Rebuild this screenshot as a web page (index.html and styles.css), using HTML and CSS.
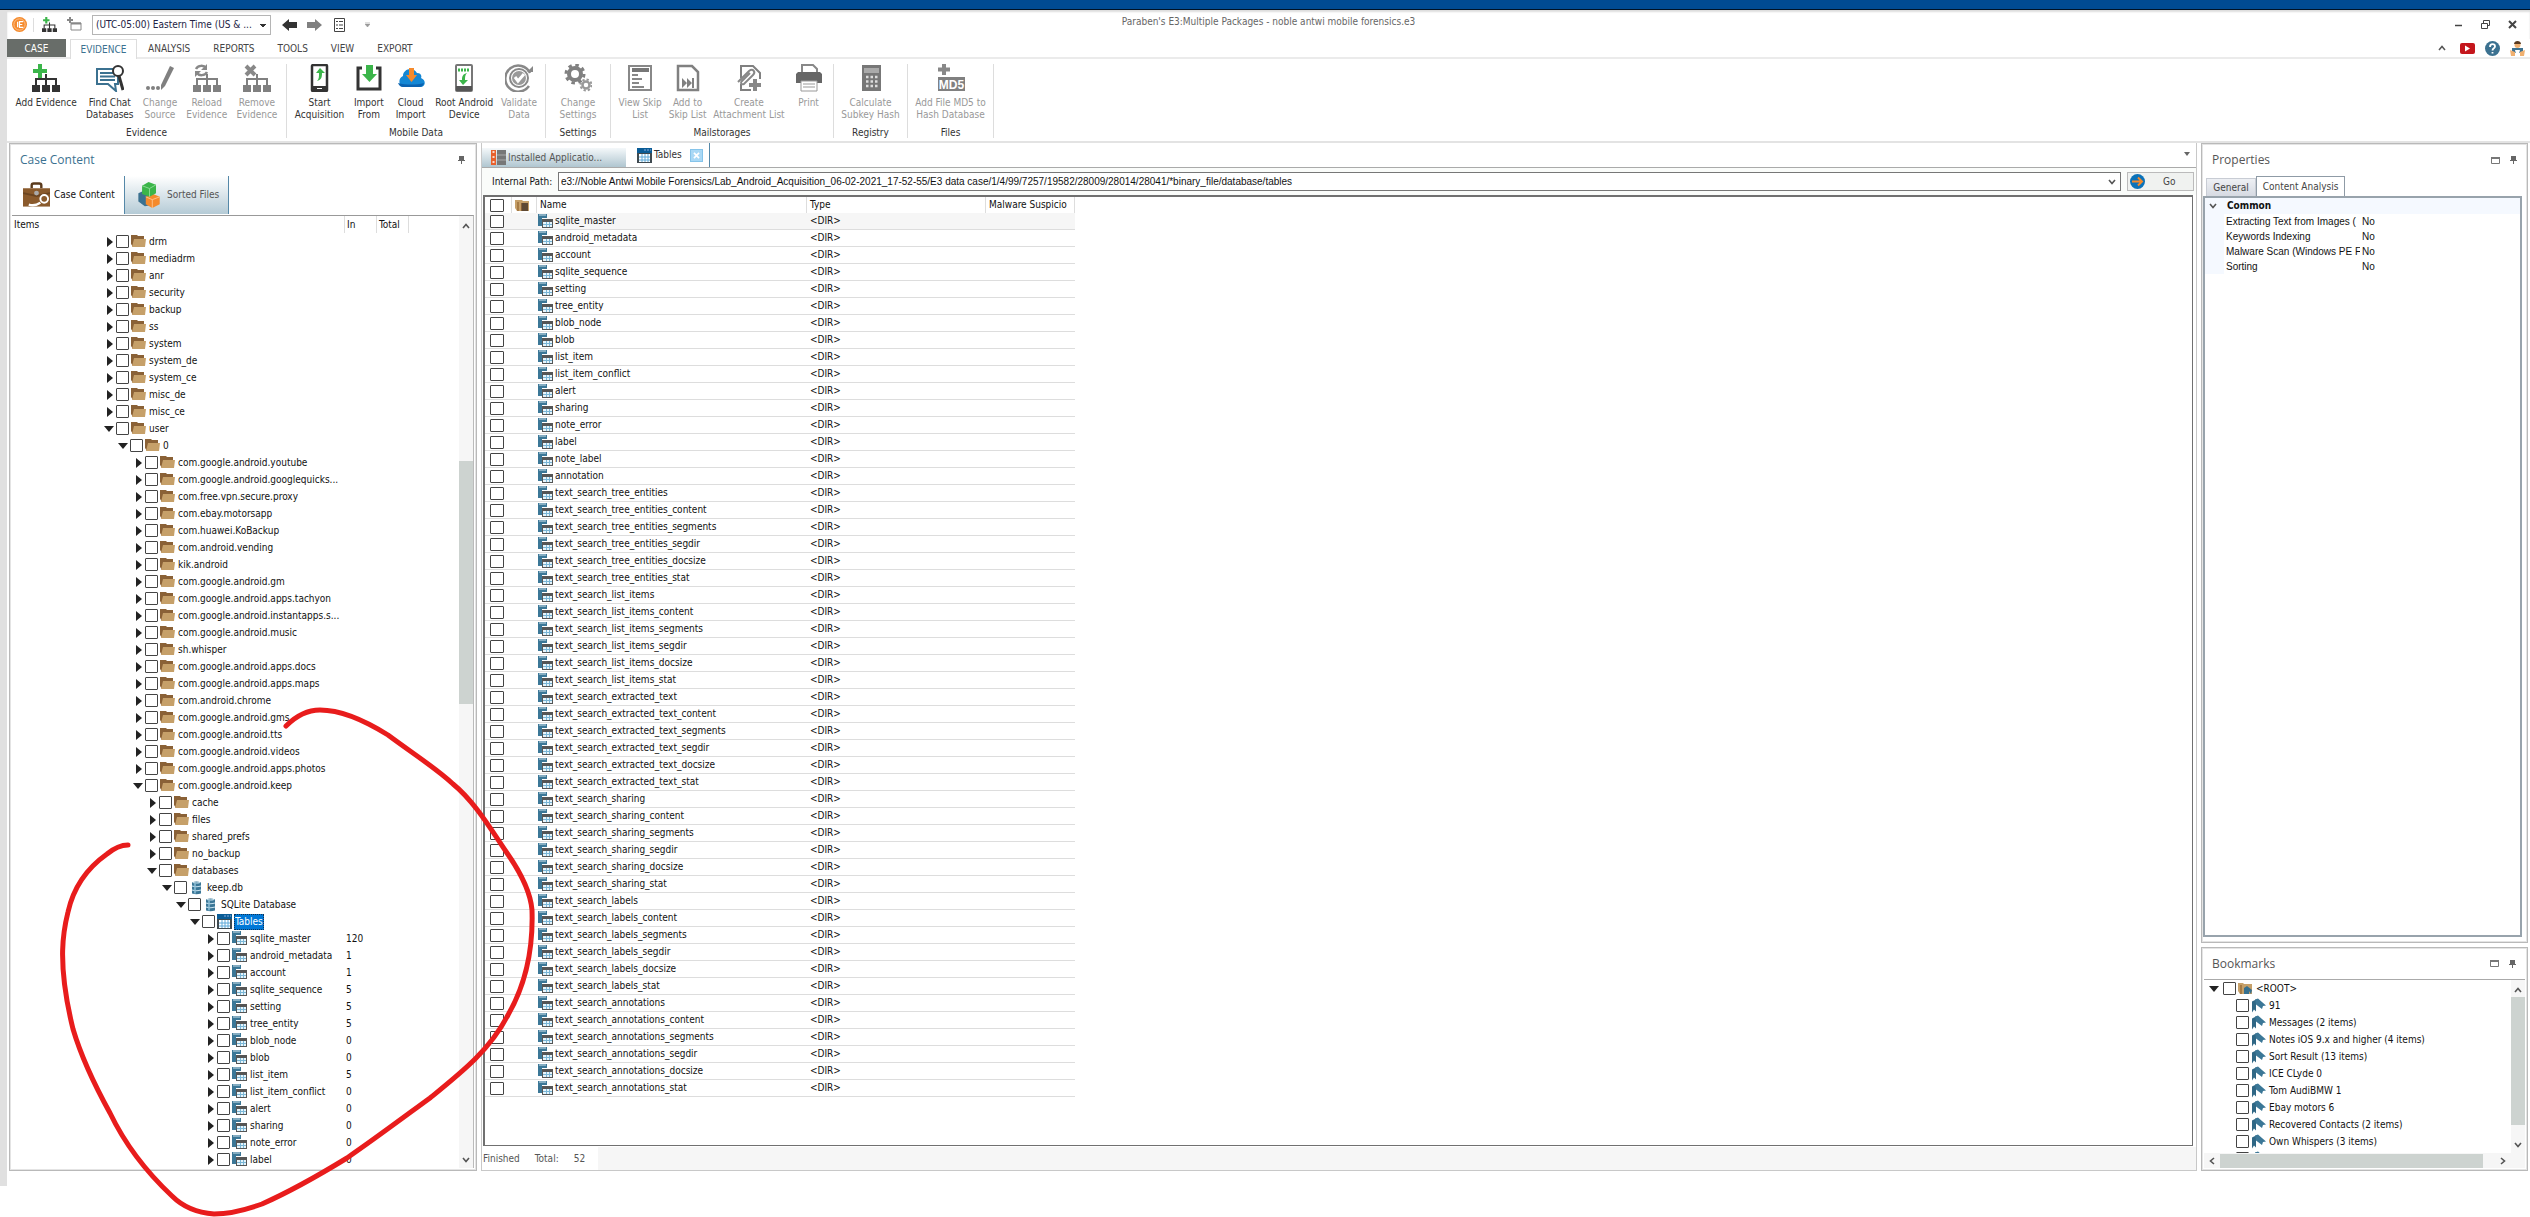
FILE: index.html
```html
<!DOCTYPE html>
<html lang="en">
<head>
<meta charset="utf-8">
<title>Paraben's E3:Multiple Packages - noble antwi mobile forensics.e3</title>
<link rel="stylesheet" href="styles.css">
</head>
<body>
<svg width="0" height="0" class="defs" aria-hidden="true">
  <symbol id="folder" viewBox="0 0 15 13"><path d="M0 0h6l1 1h6v11H2L0 9z" fill="#8a6136"/><path d="M3 4h12l-1 8H1z" fill="#c6a069"/></symbol>
  <symbol id="folder-list" viewBox="0 0 15 13"><path d="M0 1h7l1 1h6v10H2L0 9z" fill="#c6a069"/><path d="M2 3h2v9H2z" fill="#a67b45"/><path d="M6 4h7v8H6z" fill="#8a6136"/><path d="M7 5h6M7 7h6M7 9h6M7 11h6" stroke="#333"/></symbol>
  <symbol id="folder-mark" viewBox="0 0 15 13"><path d="M0 1h5l1 1h8v10H2L0 9z" fill="#c6a069"/><path d="M2 3h2v9H2z" fill="#a67b45"/><path d="M6 6l3-2 5 4-1 4-2-3v3H6z" fill="#36708f"/></symbol>
  <symbol id="db" viewBox="0 0 15 14"><path d="M3 2q4.500-2 9 0v11q-4.500 1.500-9 0z" fill="#3b7797"/><path d="M3 5.500q4.500 1.500 9 0M3 9.500q4.500 1.500 9 0M4 2q3.500 1 7 0" fill="none" stroke="#c8e2ee" stroke-width="1.2"/><path d="M6 3v10" stroke="#8fc0d8" stroke-width="1.500"/></symbol>
  <symbol id="table" viewBox="0 0 15 15"><path d="M0 0h15v15H0z" fill="#3f4a50"/><path d="M0 0h15v5H0z" fill="#0a5c96"/><path d="M7 2h2M10 2h2M13 2h1" stroke="#8ad" stroke-width="1"/><path d="M2 6h11v8H2z" fill="#fff"/><path d="M5 6v8M8 6v8M11 6v8M2 9h11M2 12h11" stroke="#5ea9d8"/></symbol>
  <symbol id="tables" viewBox="0 0 15 15"><path d="M0 0h9v4H4v8H0z" fill="#3b7797"/><path d="M1 1h7" stroke="#cfe3ec"/><path d="M4 5h11v9H4z" fill="#555"/><path d="M5 8h9v5H5z" fill="#e6f4fb"/><path d="M8.500 8v5M11.500 8v5M5 10.500h9" stroke="#7ab6d6"/></symbol>
  <symbol id="mark" viewBox="0 0 15 14"><path d="M1 3l4-2v12l-2-2-2 3z" fill="#2f6785"/><path d="M4 1l3-1 8 7-3 .5-1 3L5 6z" fill="#3b7797"/></symbol>
  <symbol id="pin" viewBox="0 0 8 8"><path d="M2 0h5v4h1v1H5v3H4V5H1V4h1z" fill="#666"/></symbol>
  <symbol id="max" viewBox="0 0 9 7"><path d="M.5.5h8v6h-8z" fill="none" stroke="#777"/><path d="M0 1h9" stroke="#777" stroke-width="2"/></symbol>
  <symbol id="chev" viewBox="0 0 8 6"><path d="M1 1l3 3.500L7 1" fill="none" stroke="#555" stroke-width="1.600"/></symbol>
  <symbol id="net" viewBox="0 0 28 18"><path d="M14 0v12M4 12V5h20v7" fill="none" stroke="currentColor" stroke-width="2"/><path d="M0 11h8v7H0zM10 11h8v7h-8zM20 11h8v7h-8z" fill="currentColor"/></symbol>
</svg>

<div class="host-bar"></div>
<div class="frame">
  <header class="titlebar">
    <div class="quick">
      <svg class="logo" viewBox="0 0 16 16"><circle cx="8" cy="8" r="8" fill="#f58a2c"/><circle cx="8" cy="8" r="6" fill="none" stroke="#fcc491"/><path d="M12 5H8v6h4M8 8h3M6 5v6" stroke="#fff" stroke-width="1.300" fill="none"/></svg>
      <i class="sep"></i>
      <svg class="q-add" viewBox="0 0 28 28"><path d="M8 0v12M2 6h12" stroke="#3bb54a" stroke-width="4"/><use href="#net" y="10" width="28" height="18" color="#333"/></svg>
      <svg class="q-win" viewBox="0 0 15 15"><path d="M3 0v6M0 3h6" stroke="#888" stroke-width="2"/><path d="M4 6h10v7H4z" fill="none" stroke="#888"/><path d="M4 6.500h10" stroke="#888" stroke-width="2"/></svg>
      <select aria-label="Time zone"><option>(UTC-05:00) Eastern Time (US &amp; ...</option></select>
      <svg class="arrow" viewBox="0 0 15 12"><path d="M0 6l7-6v3h8v6H7v3z" fill="#333"/></svg>
      <svg class="arrow" viewBox="0 0 15 12"><path d="M15 6L8 0v3H0v6h8v3z" fill="#808080"/></svg>
      <svg class="q-list" viewBox="0 0 11 14"><path d="M.5.5h10v13H.5z" fill="none" stroke="#444"/><path d="M2 3.500h2M5 3.500h4M2 7h2M5 7h4M2 10.500h2M5 10.500h4" stroke="#444"/></svg>
      <svg class="q-more" viewBox="0 0 5 5"><path d="M0 0h5M0 2h5L2.500 5z" fill="#999" stroke="#999" stroke-width=".6"/></svg>
    </div>
    <h1>Paraben's E3:Multiple Packages - noble antwi mobile forensics.e3</h1>
    <div class="win">
      <button aria-label="Minimize"><svg viewBox="0 0 9 9"><path d="M1 5.500h7" stroke="#444" stroke-width="1.500"/></svg></button>
      <button aria-label="Restore"><svg viewBox="0 0 9 9"><path d="M.5 3.500h6v5h-6zM2.500 3V.5h6v5H7" fill="none" stroke="#444"/></svg></button>
      <button aria-label="Close"><svg viewBox="0 0 9 9"><path d="M1 1l7 7M8 1L1 8" stroke="#444" stroke-width="2"/></svg></button>
    </div>
  </header>

  <nav class="menu">
    <button class="case">CASE</button>
    <button class="on">EVIDENCE</button>
    <button>ANALYSIS</button><button>REPORTS</button><button>TOOLS</button><button>VIEW</button><button>EXPORT</button>
    <div class="help">
      <svg class="up" viewBox="0 0 8 6"><path d="M1 5l3-3.500L7 5" fill="none" stroke="#555" stroke-width="1.500"/></svg>
      <svg class="yt" viewBox="0 0 15 11"><rect width="15" height="11" rx="2" fill="#c4161c"/><path d="M5 2.500l5 3-5 3z" fill="#fff"/></svg>
      <svg class="hp" viewBox="0 0 15 15"><circle cx="7.500" cy="7.500" r="7.500" fill="#3b7190"/><path d="M5 6c0-4 5-3.500 5-.5 0 2-2.500 1.500-2.500 4M7.500 11v1.500" fill="none" stroke="#fff" stroke-width="1.800"/></svg>
      <svg class="hp" viewBox="0 0 15 15"><circle cx="7.500" cy="4" r="3" fill="#f0b070"/><path d="M4 3c0-4 7-4 7 0z" fill="#5a3a20"/><path d="M2 7h11v5H2z" fill="#3b7190"/><path d="M0 9l5 2v4H1zM15 9l-5 2v4h4z" fill="#f0b070"/><path d="M5 9h5l-1 4H6z" fill="#fff"/></svg>
    </div>
  </nav>

  <div class="ribbon">
    <section class="group g-evidence">
      <div class="tools">
        <button><svg viewBox="0 0 28 28"><path d="M8 0v14M1 7h14" stroke="#3bb54a" stroke-width="4"/><use href="#net" y="10" width="28" height="18" color="#333"/></svg>Add Evidence</button>
        <button><svg viewBox="0 0 28 28"><path d="M1 5h21v15h-3l1 7-8-7H1z" fill="#fff" stroke="#3b7190" stroke-width="2"/><path d="M4 9h14M4 12.500h15M4 16h15" stroke="#3b7190" stroke-width="2"/><circle cx="22" cy="7" r="5" fill="#fff" stroke="#333" stroke-width="2"/><path d="M23 12l4 14" stroke="#333" stroke-width="3"/></svg>Find Chat<br>Databases</button>
        <button disabled><svg viewBox="0 0 28 28"><path d="M24 2l4 2-9 18-4 4v-5z" fill="#808080"/><circle cx="2" cy="24" r="2" fill="#808080"/><circle cx="7" cy="24" r="2" fill="#808080"/><circle cx="12" cy="24" r="2" fill="#808080"/></svg>Change<br>Source</button>
        <button disabled><svg viewBox="0 0 28 28"><path d="M3 5c2-4 8-4 10-1M14 8c-2 4-8 4-10 1" fill="none" stroke="#888" stroke-width="2.500"/><path d="M14 0v6H8zM2 13V7h6z" fill="#888"/><use href="#net" y="10" width="28" height="18" color="#808080"/></svg>Reload<br>Evidence</button>
        <button disabled><svg viewBox="0 0 28 28"><path d="M3 2l9 9M12 2l-9 9" stroke="#888" stroke-width="4"/><use href="#net" y="10" width="28" height="18" color="#808080"/></svg>Remove<br>Evidence</button>
      </div><h2>Evidence</h2>
    </section>
    <section class="group g-mobile">
      <div class="tools">
        <button><svg viewBox="0 0 28 28"><rect x="7" y="1" width="15" height="26" rx="1" fill="#fff" stroke="#333" stroke-width="2.500"/><path d="M6 22h17v5H6z" fill="#333"/><path d="M12 24.500h5" stroke="#fff"/><path d="M15 4l5 5h-3c0 5-1 7-5 8 2-2 2-4 2-8h-3z" fill="#3bb54a"/></svg>Start<br>Acquisition</button>
        <button><svg viewBox="0 0 28 28"><path d="M7 4H3v21h22V4h-4" fill="none" stroke="#333" stroke-width="3"/><path d="M11 1h7v9h4l-7.500 8L7 10h4z" fill="#3bb54a"/></svg>Import<br>From</button>
        <button><svg viewBox="0 0 28 28"><path d="M6 23a6 6 0 010-11C6 5 16 2 20 9c4 0 5 3 4 5 5 2 5 8 0 9z" fill="#1487d4"/><path d="M1 19c8 2 18 2 26 0-1 3-3 4-5 4H6c-3 0-4-2-5-4z" fill="#0a62b0"/><path d="M12 4h5v7h3l-5.500 7L9 11h3z" fill="#f58a2c"/></svg>Cloud<br>Import</button>
        <button><svg viewBox="0 0 28 28"><rect x="6" y="1" width="16" height="26" rx="1" fill="#fff" stroke="#777" stroke-width="2"/><path d="M6 22h16v5H6z" fill="#555"/><path d="M8 6h12" stroke="#3bb54a" stroke-width="3" stroke-dasharray="2 1"/><path d="M13 21l-4-5h3c0-4 1-6 5-7-2 2-2 4-2 7h3z" fill="#3bb54a"/></svg>Root Android<br>Device</button>
        <button disabled><svg viewBox="0 0 28 28"><path d="M25 9a13 13 0 10-1 13" fill="none" stroke="#888" stroke-width="2.500"/><circle cx="14" cy="14" r="9" fill="none" stroke="#888" stroke-width="2"/><circle cx="14" cy="14" r="7" fill="#999"/><path d="M10 13l3 4 6-7" fill="none" stroke="#fff" stroke-width="3"/><path d="M22 8h6V2z" fill="#888"/></svg>Validate<br>Data</button>
      </div><h2>Mobile Data</h2>
    </section>
    <section class="group g-settings">
      <div class="tools">
        <button disabled><svg viewBox="0 0 28 28"><circle cx="11" cy="10" r="6" fill="none" stroke="#808080" stroke-width="4"/><circle cx="11" cy="10" r="9" fill="none" stroke="#808080" stroke-width="3" stroke-dasharray="3.500 3.570"/><circle cx="22" cy="21" r="3.500" fill="none" stroke="#999" stroke-width="2.500"/><circle cx="22" cy="21" r="5.500" fill="none" stroke="#999" stroke-width="2" stroke-dasharray="2.300 2"/></svg>Change<br>Settings</button>
      </div><h2>Settings</h2>
    </section>
    <section class="group g-mail">
      <div class="tools">
        <button disabled><svg viewBox="0 0 28 28"><path d="M3 2h22v24H3z" fill="none" stroke="#888" stroke-width="2"/><path d="M6 6h17" stroke="#777" stroke-width="4"/><path d="M6 11h6M6 15h10M6 19h7M6 23h12" stroke="#888" stroke-width="2"/></svg>View Skip<br>List</button>
        <button disabled><svg viewBox="0 0 28 28"><path d="M4 2h14l6 6v18H4z" fill="none" stroke="#808080" stroke-width="2.500"/><path d="M8 14l5 5-5 5zM13 14l5 5-5 5zM18 14h2v10h-2z" fill="#808080"/></svg>Add to<br>Skip List</button>
        <button disabled><svg viewBox="0 0 28 28"><path d="M6 14V2h12l7 7v6M6 20v6h10" fill="none" stroke="#808080" stroke-width="2"/><path d="M3 18L14 7c4-3 7 1 4 4L9 20c-3 1-4-1-2-3l8-8" fill="none" stroke="#888" stroke-width="2"/><path d="M20 15v12M14 21h12" stroke="#888" stroke-width="4"/></svg>Create<br>Attachment List</button>
        <button disabled><svg viewBox="0 0 28 28"><path d="M7 8V1h11l4 4v4" fill="none" stroke="#888" stroke-width="2"/><path d="M3 8h22l2 2v9H1v-9z" fill="#666"/><path d="M6 17h16v10H6z" fill="#fff" stroke="#999"/><path d="M8 20h12M8 23h12" stroke="#999"/></svg>Print</button>
      </div><h2>Mailstorages</h2>
    </section>
    <section class="group g-registry">
      <div class="tools">
        <button disabled><svg viewBox="0 0 28 28"><path d="M5 1h19v26H5z" fill="#777"/><path d="M7 4h15v5H7z" fill="#aaa"/><path d="M9 13h12M9 17.500h12M9 22h12" stroke="#ddd" stroke-width="2.500" stroke-dasharray="2.500 2"/></svg>Calculate<br>Subkey Hash</button>
      </div><h2>Registry</h2>
    </section>
    <section class="group g-files">
      <div class="tools">
        <button disabled><svg viewBox="0 0 28 28"><path d="M7 0v11M1 5.500h12" stroke="#888" stroke-width="4"/><path d="M1 13h27v14H1z" fill="#808080"/><text x="14.500" y="25" text-anchor="middle" class="md5">MD5</text></svg>Add File MD5 to<br>Hash Database</button>
      </div><h2>Files</h2>
    </section>
  </div>

  <main class="dock">
    <section class="panel case-panel">
      <div class="phead blue"><h3>Case Content</h3><svg class="pin"><use href="#pin"/></svg></div>
      <div class="ctabs">
        <button><svg viewBox="0 0 28 26"><path d="M9 6V3q0-2 2-2h6q2 0 2 2v3" fill="none" stroke="#5a3a1c" stroke-width="2.500"/><path d="M0 6h28v19H0z" fill="#8a5a2c"/><path d="M0 11l14 3 14-3" stroke="#6b4420" stroke-width="2" fill="none"/><circle cx="14" cy="11" r="2.500" fill="#aaa"/><circle cx="22" cy="17" r="4" fill="none" stroke="#fff" stroke-width="2"/><path d="M18 21q-6 4-12 2" stroke="#fff" stroke-width="2.500" fill="none"/></svg>Case Content</button>
        <button class="alt"><svg viewBox="0 0 26 28"><path d="M1 12l7-3 6 4v12l-6 1-7-5z" fill="#3b7190"/><path d="M9 16l8-3 7 3v8l-8 4-7-4z" fill="#f58a2c"/><path d="M16 19l8-3M16 19v9M16 19l-7-3" stroke="#ffc48c"/><path d="M5 4l7-4 8 3v9l-7 4-8-3z" fill="#3bb54a"/><path d="M13 7l7-4M13 7v9M13 7L5 4" stroke="#8ddb97"/></svg>Sorted Files</button>
      </div>
      <div class="tree-box">
        <div class="tree-main">
          <div class="tree-head"><span class="c-items">Items</span><span class="c-in">In</span><span class="c-total">Total</span></div>
          <ul class="tree" id="tree"></ul>
        </div>
        <div class="vbar tall"><svg class="flip"><use href="#chev"/></svg><i></i><svg><use href="#chev"/></svg></div>
      </div>
    </section>

    <section class="center">
      <div class="dtabs">
        <button class="dim"><svg viewBox="0 0 15 15"><path d="M0 0h5v15H0z" fill="#e8602c"/><path d="M1.500 2h2M1.500 7h2M1.500 12h2" stroke="#fff" stroke-width="1.500"/><path d="M6 0h9v15H6z" fill="#777"/><path d="M6 5h9M6 10h9" stroke="#aaa"/></svg>Installed Applicatio...</button>
        <button class="on"><svg><use href="#table"/></svg>Tables<span class="x"><svg viewBox="0 0 13 13"><path d="M3.500 3.500l6 6M9.500 3.500l-6 6" stroke="#fff" stroke-width="2"/></svg></span></button>
        <svg class="drop" viewBox="0 0 6 4"><path d="M0 0h6L3 4z" fill="#666"/></svg>
      </div>
      <div class="path">
        <label for="path">Internal Path:</label>
        <div class="combo"><input id="path" type="text" value="e3://Noble Antwi Mobile Forensics/Lab_Android_Acquisition_06-02-2021_17-52-55/E3 data case/1/4/99/7257/19582/28009/28014/28041/*binary_file/database/tables"><button aria-label="Path history"><svg><use href="#chev"/></svg></button></div>
        <button class="go"><svg viewBox="0 0 15 15"><circle cx="7.500" cy="7.500" r="7.500" fill="#0b72b9"/><path d="M2 7.500h10M8 3.500l4 4-4 4" fill="none" stroke="#f58a2c" stroke-width="2"/></svg><span>Go</span></button>
      </div>
      <div class="grid-box">
        <table>
          <colgroup><col class="k1"><col class="k2"><col class="k3"><col class="k4"><col class="k5"></colgroup>
          <thead><tr><th><input type="checkbox" aria-label="Select all"></th><th><svg class="ic"><use href="#folder-list"/></svg></th><th>Name</th><th>Type</th><th>Malware Suspicio</th></tr></thead>
          <tbody id="rows"></tbody>
        </table>
      </div>
      <footer class="status"><span>Finished</span><span>Total:</span><span>52</span></footer>
    </section>

    <aside class="side">
      <section class="panel props">
        <div class="phead"><h3>Properties</h3><svg class="max"><use href="#max"/></svg><svg class="pin"><use href="#pin"/></svg></div>
        <div class="ptabs"><button>General</button><button class="on">Content Analysis</button></div>
        <div class="prop-box">
          <div class="common"><svg><use href="#chev"/></svg><b>Common</b></div>
          <dl>
            <dt>Extracting Text from Images (</dt><dd>No</dd>
            <dt>Keywords Indexing</dt><dd>No</dd>
            <dt>Malware Scan (Windows PE Fil</dt><dd>No</dd>
            <dt>Sorting</dt><dd>No</dd>
          </dl>
        </div>
      </section>
      <section class="panel marks">
        <div class="phead"><h3>Bookmarks</h3><svg class="max"><use href="#max"/></svg><svg class="pin"><use href="#pin"/></svg></div>
        <div class="marks-box">
          <div class="marks-main">
            <ul id="marks"></ul>
            <div class="vbar"><svg class="flip"><use href="#chev"/></svg><i></i><svg><use href="#chev"/></svg></div>
          </div>
          <div class="hbar"><svg class="left"><use href="#chev"/></svg><i></i><svg class="right"><use href="#chev"/></svg></div>
        </div>
      </section>
    </aside>
  </main>
</div>

<svg class="ink" viewBox="0 0 560 1217" aria-hidden="true"><path d="M286 726Q302 710 320 710Q348 710 388 735C412 753 436 768 453 784C474 801 490 828 507 853Q530 886 532 910Q534 970 508 1015C490 1050 462 1072 430 1098C404 1117 376 1138 347 1158Q298 1188 262 1204Q234 1214 214 1214Q188 1212 172 1196C140 1166 122 1138 110 1113Q84 1066 73 1029C56 960 64 928 68 912Q76 876 107 854Q118 845 128 845"/></svg>
<script src="app.js"></script>
</body>
</html>
```
FILE: styles.css
```css
* { box-sizing: border-box; }
body { margin: 0; min-height: 100vh; background: #fff; color: #111; font: 10px/12px "DejaVu Sans Condensed", "Noto Sans", sans-serif; position: relative; }
h1, h2, h3, ul, dl, dd { margin: 0; padding: 0; font-weight: normal; font-size: inherit; }
ul { list-style: none; }
button, input, select { font: inherit; color: inherit; margin: 0; padding: 0; border: 0; background: none; border-radius: 0; }
svg { display: block; flex: none; }
.defs { position: absolute; }
.host-bar { height: 10px; background: #004b93; border-bottom: 1px solid #001225; }
.frame { border-left: 7px solid #e0e0e0; padding-bottom: 15px; }

/* Title bar */
.titlebar { height: 29px; display: grid; grid-template-columns: 1fr auto 1fr; align-items: center; box-shadow: inset 0 2px 2px #ddd; }
.titlebar h1 { color: #666; padding-bottom: 6px; }
.quick { display: flex; align-items: center; padding-left: 5px; }
.logo { width: 15px; height: 15px; }
.sep { width: 1px; height: 14px; background: #ddd; margin: 0 8px 0 6px; }
.q-add { width: 15px; height: 15px; margin-right: 10px; }
.q-win { width: 15px; height: 15px; margin-right: 10px; }
.quick select { width: 179px; height: 20px; appearance: none; border: 1px solid #b5b5b5; padding-left: 3px; color: #224; margin-right: 11px; background: linear-gradient(#333, #333) 167px 8px / 6px 1px no-repeat, linear-gradient(#333, #333) 168px 9px / 4px 1px no-repeat, linear-gradient(#333, #333) 169px 10px / 2px 1px no-repeat; }
.arrow { width: 15px; height: 12px; margin-right: 10px; }
.q-list { width: 11px; height: 14px; margin: 0 20px 0 2px; }
.q-more { width: 5px; height: 5px; }
.win { display: flex; justify-content: flex-end; gap: 18px; padding-right: 13px; }
.win svg { width: 9px; height: 9px; }

/* Menu */
.menu { height: 20px; display: flex; align-items: stretch; border-bottom: 2px solid #ebebeb; color: #444; }
.menu button { margin-right: 23px; padding-top: 1px; }
.menu .case { width: 59px; margin-right: 4px; background: #686d69; color: #fff; }
.menu .on { width: 67px; height: 20px; margin-right: 11px; background: #fff; border: 1px solid #ddd; border-bottom: 0; color: #3b7190; }
.help { margin-left: auto; display: flex; align-items: center; gap: 10px; padding-right: 5px; }
.up { width: 8px; height: 6px; margin-right: 4px; }
.yt { width: 15px; height: 11px; }
.hp { width: 15px; height: 15px; }

/* Ribbon */
.ribbon { height: 84px; display: flex; padding-top: 5px; border-bottom: 2px solid #e3e3e3; }
.group { height: 74px; border-right: 1px solid #ddd; display: flex; flex-direction: column; justify-content: space-between; }
.tools { display: flex; justify-content: space-around; padding: 0 4px; }
.tools button { display: flex; flex-direction: column; align-items: center; color: #333; text-align: center; white-space: nowrap; min-width: 34px; }
.tools button:disabled { color: #999; }
.tools svg { width: 28px; height: 28px; margin-bottom: 5px; }
.group h2 { text-align: center; color: #333; line-height: 10px; }
.g-evidence { width: 280px; }
.g-mobile { width: 259px; }
.g-settings { width: 65px; }
.g-mail { width: 223px; }
.g-registry { width: 74px; }
.g-files { width: 86px; }
.md5 { font: bold 12px "Liberation Sans", sans-serif; fill: #fff; }

/* Docked panels */
.dock { display: grid; grid-template-columns: 468px minmax(0, 1fr) 327px; gap: 4px; padding: 0 2px; }
.panel { border: 1px solid #b9b9b9; box-shadow: inset 0 0 0 1px #e4e4e4; padding: 0 2px 2px; display: flex; flex-direction: column; }
.phead { height: 32px; display: flex; align-items: center; gap: 9px; padding: 0 9px 0 8px; color: #555; }
.phead h3 { flex: 1; font: 12px/16px "Open Sans", "Noto Sans", sans-serif; }
.blue h3 { color: #3b7190; }
.pin { width: 8px; height: 8px; }
.max { width: 9px; height: 7px; }
.ctabs { display: flex; height: 39px; padding-bottom: 1px; }
.ctabs button { width: 112px; display: flex; align-items: center; gap: 4px; padding-left: 11px; white-space: nowrap; }
.ctabs svg { width: 27px; height: 26px; }
.ctabs .alt { width: 105px; background: linear-gradient(#fff, #b5cbd6); border: solid #5588a8; border-width: 0 1px; color: #555; }
.tree-box { flex: 1; display: flex; border-top: 1px solid #999; border-right: 1px solid #bbb; }
.tree-main { flex: 1; min-width: 0; }
.tree-head { display: flex; height: 17px; line-height: 17px; }
.tree-head span { border-right: 1px solid #ddd; padding-left: 2px; }
.c-items { width: 333px; }
.c-in, .c-total { width: 32px; }
.tree-row, .mark-row { display: flex; align-items: center; height: 17px; white-space: nowrap; }
.name { width: 334px; flex: none; display: flex; align-items: center; }
.lv0 { padding-left: 95px; } .lv1 { padding-left: 109px; } .lv2 { padding-left: 124px; } .lv3 { padding-left: 138px; }
.lv4 { padding-left: 153px; } .lv5 { padding-left: 167px; } .lv6 { padding-left: 181px; } .lv7 { padding-left: 196px; }
.tw { width: 9px; height: 10px; flex: none; }
.tw::before { content: ""; display: block; }
.shut::before { border: solid transparent; border-width: 5px 0 5px 6px; border-left-color: #222; }
.open::before { margin-top: 2px; margin-left: -3px; width: 0; border: solid transparent; border-width: 6px 5px 0; border-top-color: #222; }
label.node { display: flex; align-items: center; }
input[type=checkbox] { appearance: none; width: 13px; height: 13px; border: 1px solid #444; border-radius: 1px; background: #fff; flex: none; display: block; }
.ic { width: 15px; height: 15px; }
.node .ic { margin: 0 2px; }
.node .text { padding: 0 1px; line-height: 16px; }
.node .sel { background: #0078d7; color: #fff; outline: 1px dotted #135; outline-offset: -1px; }
.vbar { width: 14px; background: #f6f6f6; display: flex; flex-direction: column; align-items: center; padding: 7px 0 5px; }
.vbar svg, .hbar svg { width: 8px; height: 6px; }
.vbar i { width: 14px; background: #cdd3d0; height: 128px; margin-top: 4px; margin-bottom: auto; }
.vbar.tall { margin-left: 2px; }
.tall i { height: 243px; margin-top: 232px; }
.flip { transform: rotate(180deg); }

/* Centre document */
.center { display: flex; flex-direction: column; border: solid #c8c8c8; border-width: 0 1px 1px; min-width: 0; }
.dtabs { height: 25px; display: flex; align-items: flex-end; border-bottom: 1px solid #aaa; }
.dtabs button { display: flex; align-items: center; gap: 2px; white-space: nowrap; }
.dtabs button svg { width: 15px; height: 15px; }
.dtabs .dim { width: 144px; height: 19px; padding-left: 9px; color: #555; background: linear-gradient(#f4f8fa, #b0c6d0); }
.dtabs .on { width: 84px; height: 24px; padding-left: 11px; color: #333; border-right: 1px solid #5588a8; }
.x { margin-left: 6px; background: #a9d8f5; border: 1px solid #86c4ea; }
.dtabs .x svg { width: 11px; height: 11px; }
.drop { width: 6px; height: 4px; margin: 0 6px 11px auto; }
.path { height: 27px; display: flex; align-items: center; padding: 0 2px 0 10px; background: #fafcfa; }
.path label { width: 66px; }
.combo { flex: 1; height: 19px; display: flex; border: 1px solid #777; background: #fff; }
.combo input { flex: 1; min-width: 0; padding-left: 2px; font-family: "Liberation Sans", sans-serif; }
.combo button { width: 16px; }
.combo svg { width: 8px; height: 6px; margin: 0 auto; }
.go { width: 67px; height: 19px; margin-left: 6px; border: 1px solid #bbb; background: #f0f2f0; display: flex; align-items: center; padding-left: 2px; color: #444; }
.go svg { width: 15px; height: 15px; }
.go span { margin-left: 18px; }
.grid-box { flex: 1; margin: 0 3px 0 1px; border: 2px solid #707070; border-width: 2px 1px 1px 2px; }
table { table-layout: fixed; width: 590px; border-collapse: separate; border-spacing: 0; }
.k1 { width: 27px; } .k2 { width: 25px; } .k3 { width: 270px; } .k4 { width: 179px; } .k5 { width: 89px; }
th { height: 16px; padding: 0 3px; text-align: left; font-weight: normal; line-height: 14px; border-right: 1px solid #ddd; white-space: nowrap; overflow: hidden; }
td { height: 17px; padding: 0 3px; border-bottom: 1px solid #ddd; line-height: 16px; white-space: nowrap; }
th:first-child, td:first-child { padding-left: 5px; }
td:nth-child(3) { padding-left: 1px; }
table input[type=checkbox] { width: 14px; }
tbody tr:first-child td { background: #f6f6f6; }
.cell { display: flex; align-items: center; gap: 2px; height: 16px; }
.status { height: 23px; display: flex; align-items: center; margin-top: 1px; background: linear-gradient(#fff, #fff) 0 0 / 116px 100% no-repeat #f6f6f6; color: #555; }
.status span { padding-left: 1px; margin-right: 14px; }

/* Right column */
.side { display: flex; flex-direction: column; gap: 4px; }
.props { flex: 1; padding: 0 5px 5px 1px; }
.phead:has(.max) { padding-right: 9px; }
.props .phead { padding: 0 5px 0 9px; }
.ptabs { display: flex; align-items: flex-end; height: 20px; padding-left: 3px; color: #444; }
.ptabs button { width: 50px; height: 18px; background: linear-gradient(#eef0f4, #d6dae2); border: 1px solid #c8ccd4; border-bottom: 0; white-space: nowrap; }
.ptabs .on { width: 89px; height: 20px; background: #fff; border-color: #8f9ba6; }
.prop-box { flex: 1; border: 2px solid #98a3ac; }
.common { height: 16px; display: flex; align-items: center; gap: 10px; padding-left: 4px; background: #f5f9ff; }
.common svg { width: 8px; height: 6px; }
.prop-box dl { display: grid; grid-template-columns: 136px 1fr; grid-auto-rows: 15px; line-height: 15px; border-left: 19px solid #f5f9ff; font-family: "Liberation Sans", sans-serif; }
.prop-box dt { padding-left: 2px; white-space: nowrap; overflow: hidden; }
.prop-box dd { padding-left: 2px; }
.marks-box { border-top: 1px solid #aaa; }
.marks .phead { height: 31px; }
.marks-main { display: flex; height: 173px; overflow: hidden; }
.marks-main ul { flex: 1; overflow: hidden; }
.mark-row { padding-left: 8px; }
.mark-row.kid { padding-left: 32px; }
.mark-row .tw { width: 11px; }
.hbar { height: 15px; display: flex; align-items: center; background: #f6f6f6; padding: 0 18px 0 4px; }
.hbar i { flex: 1; height: 14px; margin: 0 16px 0 4px; background: #cdd3d0; }
.left { transform: rotate(90deg); }
.right { transform: rotate(-90deg); }

/* Hand-drawn mark over the window */
.ink { position: absolute; left: 0; top: 0; width: 560px; height: 1217px; pointer-events: none; }
.ink path { fill: none; stroke: #e81c1c; stroke-width: 5; stroke-linecap: round; stroke-linejoin: round; }
```
FILE: app.js
```js
const icon = id => `<svg class="ic"><use href="#${id}"/></svg>`;
const node = (id, text, cls = "") =>
  `<label class="node"><input type="checkbox">${icon(id)}<span class="text ${cls}">${text}</span></label>`;

// Evidence tree: [level, icon, open, names]
const branches = [
  [0, "folder", 0, "drm mediadrm anr security backup ss system system_de system_ce misc_de misc_ce"],
  [0, "folder", 1, "user"],
  [1, "folder", 1, "0"],
  [2, "folder", 0, "com.google.android.youtube com.google.android.googlequicks... com.free.vpn.secure.proxy com.ebay.motorsapp com.huawei.KoBackup com.android.vending kik.android com.google.android.gm com.google.android.apps.tachyon com.google.android.instantapps.s... com.google.android.music sh.whisper com.google.android.apps.docs com.google.android.apps.maps com.android.chrome com.google.android.gms com.google.android.tts com.google.android.videos com.google.android.apps.photos"],
  [2, "folder", 1, "com.google.android.keep"],
  [3, "folder", 0, "cache files shared_prefs no_backup"],
  [3, "folder", 1, "databases"],
  [4, "db", 1, "keep.db"],
  [5, "db", 1, "SQLite&nbsp;Database"],
  [6, "table", 1, "Tables"],
  [7, "tables", 0, "sqlite_master android_metadata account sqlite_sequence setting tree_entity blob_node blob list_item list_item_conflict alert sharing note_error label"]
];
const counts = [120, 1, 1, 5, 5, 5, 0, 0, 5, 0, 0, 0, 0, 0];
document.getElementById("tree").innerHTML = branches.map(([level, id, open, names]) =>
  names.split(" ").map((name, i) =>
    `<li class="tree-row"><div class="name lv${level}"><span class="tw ${open ? "open" : "shut"}"></span>${node(id, name, name === "Tables" ? "sel" : "")}</div>${level === 7 ? `<span>${counts[i]}</span>` : ""}</li>`
  ).join("")).join("");

// Contents of the Tables node
const plain = "sqlite_master android_metadata account sqlite_sequence setting tree_entity blob_node blob list_item list_item_conflict alert sharing note_error label note_label annotation".split(" ");
const indexed = ["tree_entities", "list_items", "extracted_text", "sharing", "labels", "annotations"];
const parts = ["", "_content", "_segments", "_segdir", "_docsize", "_stat"];
const tables = plain.concat(indexed.flatMap(t => parts.map(p => `text_search_${t}${p}`)));
document.getElementById("rows").innerHTML = tables.map(name =>
  `<tr><td><input type="checkbox" aria-label="${name}"></td><td></td><td><div class="cell">${icon("tables")}${name}</div></td><td>&lt;DIR&gt;</td><td></td></tr>`
).join("");

const marks = ["91", "Messages (2 items)", "Notes iOS 9.x and higher (4 items)", "Sort Result (13 items)", "ICE CLyde 0", "Tom AudiBMW 1", "Ebay motors 6", "Recovered Contacts (2 items)", "Own Whispers (3 items)", ""];
document.getElementById("marks").innerHTML =
  `<li class="mark-row"><span class="tw open"></span>${node("folder-mark", "&lt;ROOT&gt;")}</li>` +
  marks.map(m => `<li class="mark-row kid">${node("mark", m)}</li>`).join("");
```
